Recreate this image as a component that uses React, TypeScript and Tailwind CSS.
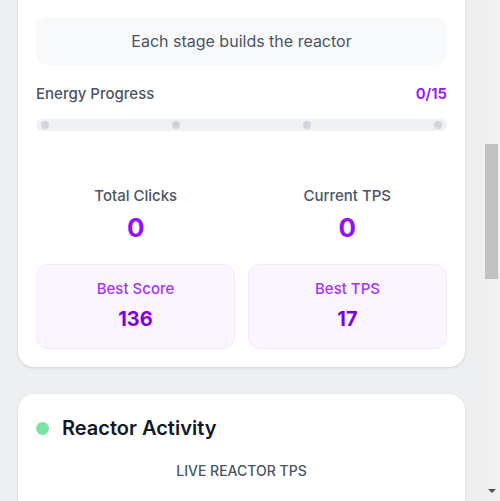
import { useLayoutEffect, useRef } from "react";

const stats = [
  { label: "Total Clicks", value: 0 },
  { label: "Current TPS", value: 0 },
];

const bests = [
  { label: "Best Score", value: 136 },
  { label: "Best TPS", value: 17 },
];

const stages = [0, 1, 2, 3];

function ScrollTrack() {
  return (
    <div className="flex h-full w-[15px] flex-col bg-[#f0f0f1]">
      <div className="mt-[144px] h-[135px] w-[13px] bg-[#c1c1c1]" />
      <div className="mt-auto mb-2 ml-[3px] h-0 w-0 border-x-[4px] border-t-[4px] border-x-transparent border-t-[#505050]" />
    </div>
  );
}

export default function App() {
  const pane = useRef<HTMLDivElement>(null);

  useLayoutEffect(() => {
    if (pane.current) pane.current.scrollTop = 479;
  }, []);

  return (
    <div className="flex h-[501px] w-[500px] bg-[#eeeff1] font-['Inter',sans-serif]">
      <div ref={pane} className="h-full w-[485px] overflow-hidden">
        <div className="flex min-h-[1748px] flex-col gap-[27px] pl-[18px] pr-[20px] pt-4 pb-8">
          <section className="rounded-2xl bg-white px-[18px] pb-[18px] shadow-[0_1px_3px_rgba(0,0,0,0.12)]">
            <div className="h-[480px]" />
            <div className="flex h-12 items-center justify-center rounded-xl bg-[#f8f9fb] text-[16px] text-[#4b5563]">
              Each stage builds the reactor
            </div>

            <div className="mt-[19px] flex items-center justify-between text-[15px] leading-5">
              <span className="font-medium text-[#4b5563]">Energy Progress</span>
              <span className="font-semibold text-purple-600">0/15</span>
            </div>
            <div className="mt-[15px] flex h-3 items-center justify-between rounded-full bg-[#f0f1f3] px-[5px]">
              {stages.map((s) => (
                <span key={s} className="h-2 w-2 rounded-full bg-[#d1d5db]" />
              ))}
            </div>

            <div className="mt-[55px] grid grid-cols-2 gap-3">
              {stats.map((s) => (
                <div key={s.label} className="flex flex-col items-center">
                  <span className="text-[15px] font-medium leading-5 text-[#4b5563]">{s.label}</span>
                  <span className="mt-[6px] text-[26px] font-bold leading-8 text-purple-600">{s.value}</span>
                </div>
              ))}
            </div>

            <div className="mt-5 grid grid-cols-2 gap-[13px]">
              {bests.map((b) => (
                <div key={b.label} className="flex h-[85px] flex-col items-center rounded-xl border border-purple-100 bg-[#faf5ff] pt-[14px]">
                  <span className="text-[15px] font-medium leading-5 text-[#a336f5]">{b.label}</span>
                  <span className="mt-[8px] text-[20px] font-bold leading-6 text-purple-700">{b.value}</span>
                </div>
              ))}
            </div>
          </section>

          <section className="rounded-2xl bg-white px-[18px] pt-5 pb-6 shadow-[0_1px_3px_rgba(0,0,0,0.12)]">
            <div className="flex items-center gap-[13px]">
              <span className="h-[13px] w-[13px] rounded-full bg-[#7ce3a4]" />
              <h2 className="text-[20px] font-semibold leading-7 text-[#111827]">Reactor Activity</h2>
            </div>
            <p className="mt-[19px] text-center text-[14px] font-medium uppercase leading-5 text-[#4b5563]">
              Live Reactor TPS
            </p>
            <div className="h-[300px]" />
          </section>
        </div>
      </div>
      <ScrollTrack />
    </div>
  );
}
